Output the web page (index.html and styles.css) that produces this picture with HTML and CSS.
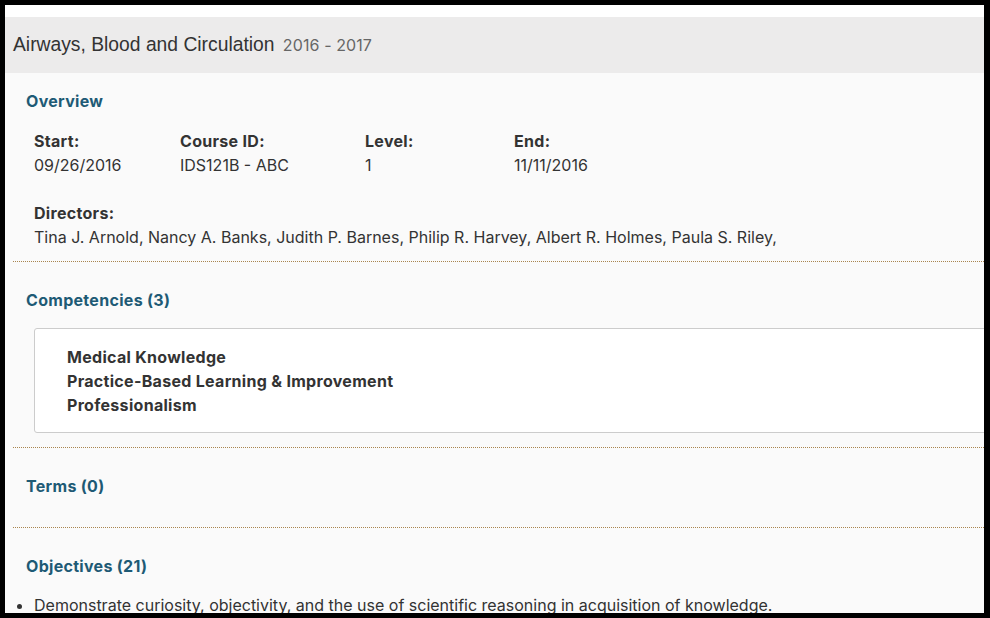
FILE: index.html
```html
<!DOCTYPE html>
<html>
<head>
<meta charset="utf-8">
<link rel="stylesheet" href="styles.css">
</head>
<body>
<div class="frame">
  <div class="topstrip"></div>
  <div class="header">
    <h1 class="title">Airways, Blood and Circulation <span class="year">2016 - 2017</span></h1>
  </div>
  <div class="content">
    <section class="section overview">
      <h2 class="heading">Overview</h2>
      <div class="facts">
        <div class="fact fact-start"><div class="label">Start:</div><div class="value">09/26/2016</div></div>
        <div class="fact fact-course"><div class="label">Course ID:</div><div class="value">IDS121B - ABC</div></div>
        <div class="fact fact-level"><div class="label">Level:</div><div class="value">1</div></div>
        <div class="fact fact-end"><div class="label">End:</div><div class="value">11/11/2016</div></div>
      </div>
      <div class="directors">
        <div class="label">Directors:</div>
        <div class="value">Tina J. Arnold, Nancy A. Banks, Judith P. Barnes, Philip R. Harvey, Albert R. Holmes, Paula S. Riley,</div>
      </div>
    </section>
    <section class="section competencies">
      <h2 class="heading">Competencies (3)</h2>
      <div class="box">
        <ul class="comp-list">
          <li>Medical Knowledge</li>
          <li>Practice-Based Learning &amp; Improvement</li>
          <li>Professionalism</li>
        </ul>
      </div>
    </section>
    <section class="section terms">
      <h2 class="heading">Terms (0)</h2>
    </section>
    <section class="section objectives">
      <h2 class="heading">Objectives (21)</h2>
      <ul class="obj-list">
        <li>Demonstrate curiosity, objectivity, and the use of scientific reasoning in acquisition of knowledge.</li>
        <li>Apply the principles of the scientific method to clinical problems.</li>
      </ul>
    </section>
  </div>
</div>
</body>
</html>
```

FILE: styles.css
```css
html, body {
  margin: 0;
  padding: 0;
  background: #000;
}
body {
  font-family: Inter, "Noto Sans", sans-serif;
  color: #333;
}
.frame {
  box-sizing: border-box;
  width: 990px;
  height: 618px;
  border-style: solid;
  border-color: #000;
  border-width: 5px 6px 5px 5px;
  background: #fafafa;
  overflow: hidden;
}
.topstrip {
  height: 12px;
  background: #fff;
}
.header {
  height: 56px;
  background: #ecebeb;
  display: flex;
  align-items: center;
  padding-left: 8px;
}
.title {
  margin: 0;
  font-family: "Liberation Sans", Arial, sans-serif;
  font-weight: normal;
  font-size: 19.3px;
  color: #333;
}
.year {
  font-family: Inter, sans-serif;
  font-size: 16px;
  color: #666;
  margin-left: 3px;
  letter-spacing: 0.1px;
}
.content {
  background: #fafafa;
}
.section {
  margin-left: 8px;
  padding-left: 13px;
  border-bottom: 1px dotted #a9854f;
}
.heading {
  margin: 0;
  font-size: 16px;
  line-height: 24px;
  font-weight: 700;
  letter-spacing: 0.3px;
  color: #1e5a75;
}
.label {
  font-weight: 700;
  font-size: 16px;
  letter-spacing: 0.3px;
  line-height: 24px;
}
.value {
  font-size: 16px;
  line-height: 24px;
}
.overview {
  padding-top: 16px;
  padding-bottom: 12px;
}
.facts {
  display: flex;
  margin-top: 16px;
  padding-left: 8px;
}
.fact-start { width: 146px; }
.fact-course { width: 185px; }
.fact-level { width: 149px; }
.directors {
  margin-top: 24px;
  padding-left: 8px;
}
.competencies {
  padding-top: 26px;
  padding-bottom: 14px;
}
.box {
  margin-top: 16px;
  margin-left: 8px;
  margin-right: -30px;
  background: #fff;
  border: 1px solid #ccc;
  border-radius: 3px;
  padding: 16px 0 15px 32px;
}
.comp-list {
  list-style: none;
  margin: 0;
  padding: 0;
  font-weight: 700;
  font-size: 16px;
  letter-spacing: 0.3px;
  line-height: 24px;
}
.terms {
  padding-top: 26px;
  padding-bottom: 29px;
}
.objectives {
  padding-top: 26px;
  padding-bottom: 10px;
}
.obj-list {
  margin: 15px 0 0 0;
  padding-left: 8px;
  font-size: 16px;
  line-height: 24px;
}
```
